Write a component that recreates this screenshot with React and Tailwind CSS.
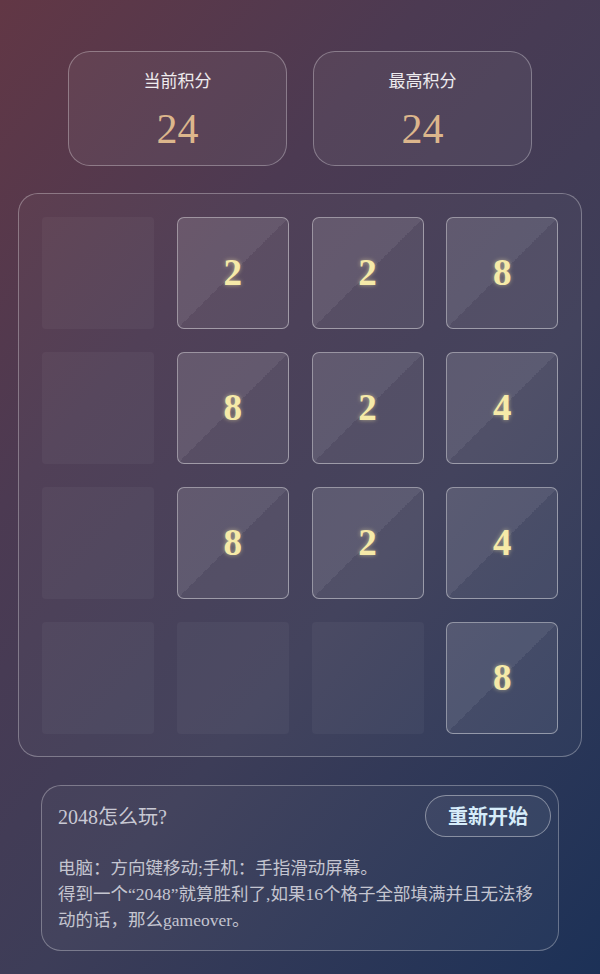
const board = [
  [0, 2, 2, 8],
  [0, 8, 2, 4],
  [0, 8, 2, 4],
  [0, 0, 0, 8],
];

function ScoreBox({ label, value }) {
  return (
    <div className="w-[219px] h-[115px] rounded-[22px] border-[1.5px] border-white/30 bg-white/5 flex flex-col items-center">
      <div className="mt-[16px] text-[17px] leading-[24px] text-white/90 font-['Noto_Sans_CJK_SC',sans-serif]">
        {label}
      </div>
      <div className="mt-[13px] text-[42px] leading-[48px] text-[#dcb68c] font-['Liberation_Serif','Noto_Sans_CJK_SC',serif]">
        {value}
      </div>
    </div>
  );
}

function Cell({ value }) {
  if (!value) {
    return <div className="w-[112px] h-[112px] rounded-[4px] bg-white/[0.035]" />;
  }
  return (
    <div className="w-[112px] h-[112px] rounded-[7px] border-[1.5px] border-white/40 bg-[linear-gradient(135deg,rgba(255,255,255,0.13)_50%,rgba(255,255,255,0.07)_50%)] flex items-center justify-center">
      <span className="text-[37px] font-bold text-[#f6eaa8] font-['Liberation_Serif',serif] [text-shadow:0_0_4px_rgba(255,240,170,0.55)]">
        {value}
      </span>
    </div>
  );
}

export default function App() {
  return (
    <div className="w-[600px] h-[974px] overflow-hidden bg-[linear-gradient(130deg,#623745_0%,#4c3a52_30%,#3d3d58_60%,#1c3157_100%)] flex flex-col items-center">
      <div className="mt-[51px] flex gap-[26px]">
        <ScoreBox label="当前积分" value="24" />
        <ScoreBox label="最高积分" value="24" />
      </div>

      <div className="mt-[27px] w-[564px] h-[564px] rounded-[20px] border-[1.5px] border-white/30 bg-white/[0.03] p-[23px] grid grid-cols-4 gap-[23px]">
        {board.flat().map((v, i) => (
          <Cell key={i} value={v} />
        ))}
      </div>

      <div className="mt-[28px] w-[518px] h-[166px] rounded-[20px] border-[1.5px] border-white/30 bg-white/[0.03] pl-[16px] pr-[7px] pt-[9px] font-['Liberation_Serif','Noto_Sans_CJK_SC',serif]">
        <div className="flex items-center justify-between">
          <div className="mt-[2px] text-[20px] text-[#c9c9d4]">2048怎么玩?</div>
          <button className="w-[126px] h-[42px] rounded-full border-[1.5px] border-white/40 bg-white/5 text-[20px] font-bold text-[#d6ecfa] font-['Noto_Sans_CJK_SC',sans-serif]">
            重新开始
          </button>
        </div>
        <div className="mt-[18px] pr-[10px] text-[17.5px] leading-[26px] text-[#c4c5d0]">
          <p>电脑：方向键移动;手机：手指滑动屏幕。</p>
          <p>得到一个“2048”就算胜利了,如果16个格子全部填满并且无法移动的话，那么gameover。</p>
        </div>
      </div>
    </div>
  );
}
